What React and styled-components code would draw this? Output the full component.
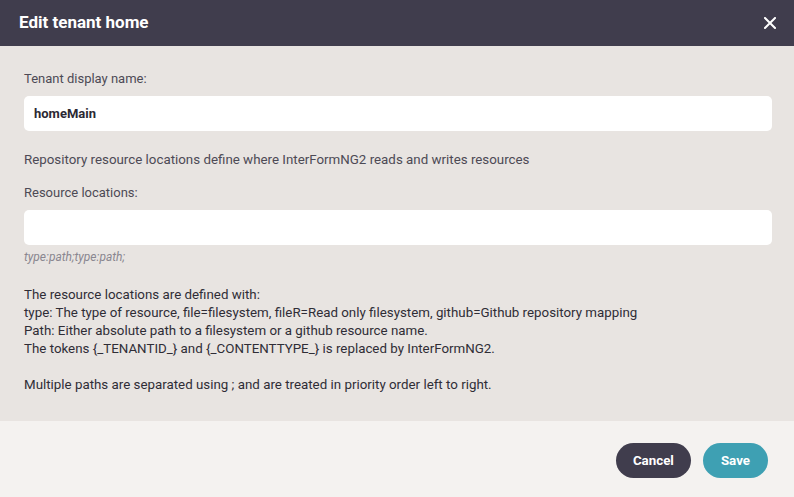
import React from "react";
import styled, { createGlobalStyle } from "styled-components";

const Global = createGlobalStyle`
  html, body { margin: 0; padding: 0; }
  body { font-family: Roboto, "Liberation Sans", sans-serif; background: #e8e4e1; }
  * { box-sizing: border-box; }
`;

const Dialog = styled.div`
  width: 794px;
  height: 497px;
  display: flex;
  flex-direction: column;
  background: #e8e4e1;
`;

const Header = styled.header`
  height: 46px;
  background: #403d4d;
  display: flex;
  align-items: center;
  justify-content: space-between;
  padding: 0 17px 0 19px;
  flex-shrink: 0;
`;

const Title = styled.h1`
  margin: 0;
  font-size: 17px;
  font-weight: 700;
  color: #ffffff;
  line-height: 20px;
  margin-top: -3px;
`;

const CloseButton = styled.button`
  border: none;
  background: none;
  padding: 0;
  width: 14px;
  height: 14px;
  display: flex;
  align-items: center;
  justify-content: center;
  cursor: pointer;
`;

const Body = styled.div`
  flex: 1;
  padding: 25px 22px 0 24px;
  display: flex;
  flex-direction: column;
`;

const Label = styled.label`
  font-size: 13px;
  color: #4d4a55;
  line-height: 16px;
  margin-top: ${(p) => p.$mt || 0}px;
  margin-bottom: 9px;
`;

const Input = styled.div`
  height: 35px;
  background: #ffffff;
  border-radius: 5px;
  display: flex;
  align-items: center;
  padding: 0 10px;
  font-size: 13px;
  font-weight: 700;
  color: #2b2933;
`;

const Paragraph = styled.p`
  margin: ${(p) => p.$mt || 0}px 0 0 0;
  font-size: 13.33px;
  color: #4d4a55;
  line-height: 16px;
`;

const Hint = styled.div`
  font-size: 12px;
  font-style: italic;
  color: #8a8790;
  margin-top: 5px;
  line-height: 14px;
`;

const Info = styled.div`
  margin-top: 22px;
  font-size: 13.33px;
  color: #2f2d36;
  line-height: 18px;
`;

const Spacer = styled.div`
  height: 18px;
`;

const Footer = styled.footer`
  height: 76px;
  background: #f4f2f0;
  display: flex;
  align-items: center;
  justify-content: flex-end;
  gap: 12px;
  padding: 3px 26px 0 0;
  flex-shrink: 0;
`;

const Button = styled.button`
  height: 35px;
  border: none;
  border-radius: 18px;
  padding: 0 ${(p) => p.$px}px;
  background: ${(p) => (p.$primary ? "#3ea0b3" : "#403d4d")};
  color: #ffffff;
  font-family: Roboto, "Liberation Sans", sans-serif;
  font-size: 13.33px;
  font-weight: 700;
  cursor: pointer;
`;

export default function App() {
  return (
    <>
      <Global />
      <Dialog>
        <Header>
          <Title>Edit tenant home</Title>
          <CloseButton aria-label="Close">
            <svg width="12" height="12" viewBox="0 0 12 12">
              <path d="M1 1L11 11M11 1L1 11" stroke="#ffffff" strokeWidth="2" strokeLinecap="square" />
            </svg>
          </CloseButton>
        </Header>
        <Body>
          <Label>Tenant display name:</Label>
          <Input>homeMain</Input>
          <Paragraph $mt={21}>
            Repository resource locations define where InterFormNG2 reads and writes resources
          </Paragraph>
          <Label as="div" $mt={17}>Resource locations:</Label>
          <Input />
          <Hint>type:path;type:path;</Hint>
          <Info>
            The resource locations are defined with:
            <br />
            type: The type of resource, file=filesystem, fileR=Read only filesystem, github=Github repository mapping
            <br />
            Path: Either absolute path to a filesystem or a github resource name.
            <br />
            The tokens {"{_TENANTID_}"} and {"{_CONTENTTYPE_}"} is replaced by InterFormNG2.
            <Spacer />
            Multiple paths are separated using ; and are treated in priority order left to right.
          </Info>
        </Body>
        <Footer>
          <Button $px={17}>Cancel</Button>
          <Button $primary $px={18}>Save</Button>
        </Footer>
      </Dialog>
    </>
  );
}
